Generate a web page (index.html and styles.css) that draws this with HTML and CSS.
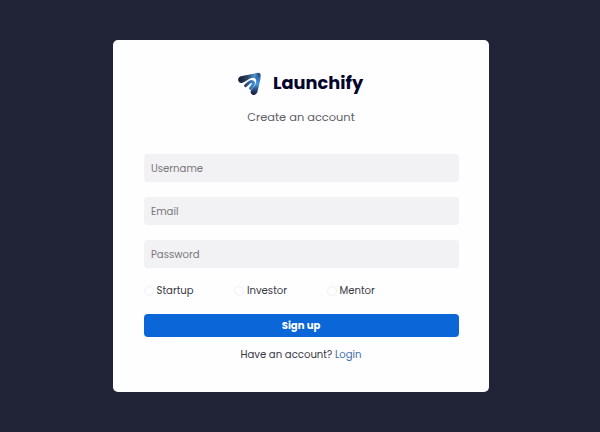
FILE: index.html
```html
<!DOCTYPE html>
<html lang="en">
<head>
<meta charset="utf-8">
<title>Launchify</title>
<link rel="stylesheet" href="styles.css">
</head>
<body>
<main class="card">
  <header class="brand">
    <svg class="logo" viewBox="0 0 72 66" aria-hidden="true">
      <defs>
        <linearGradient id="wing" x1="0" y1="0" x2="1" y2="0"><stop offset="0" stop-color="#151a35"/><stop offset=".4" stop-color="#2b415f"/><stop offset=".75" stop-color="#4f92cf"/><stop offset="1" stop-color="#16365f"/></linearGradient>
        <linearGradient id="leg" x1="0" y1="0" x2="0" y2="1"><stop offset="0" stop-color="#265c9d"/><stop offset=".45" stop-color="#4b97e0"/><stop offset=".72" stop-color="#2b4f7d"/><stop offset="1" stop-color="#151a35"/></linearGradient>
        <linearGradient id="core" x1="0" y1="0" x2="1" y2="0"><stop offset="0" stop-color="#2c4468"/><stop offset="1" stop-color="#3c8bdd"/></linearGradient>
      </defs>
      <path d="M8 10L56 0Q70-3 67 9L61 24Q54 13 43 14Q35 15 24 24L14 29Q5 33 1 24Q-2 13 8 10Z" fill="url(#wing)"/>
      <path d="M67 6Q69 12 66 24L58 58Q53 69 43 65Q34 60 40 50L50 38Q59 24 51 16Q61 14 67 6Z" fill="url(#leg)"/>
      <path d="M23 38L33 29Q42 22 46 28Q49 33 38 46" class="core"/>
    </svg>
    <h1>Launchify</h1>
  </header>
  <p class="subtitle"><span>Create an account</span></p>
  <form>
    <input class="field username" type="text" placeholder="Username" aria-label="Username">
    <input class="field email" type="email" placeholder="Email" aria-label="Email">
    <input class="field password" type="password" placeholder="Password" aria-label="Password">
    <div class="roles">
      <label><input type="radio" name="role"><span class="startup">Startup</span></label>
      <label><input type="radio" name="role"><span class="investor">Investor</span></label>
      <label><input type="radio" name="role"><span class="mentor">Mentor</span></label>
    </div>
    <button type="button">Sign up</button>
  </form>
  <p class="signin"><span>Have an account? <a href="#">Login</a></span></p>
</main>
</body>
</html>
```
FILE: styles.css
```css
* { box-sizing: border-box; }
body {
  margin: 0;
  height: 432px;
  overflow: hidden;
  display: flex;
  justify-content: center;
  align-items: center;
  background: #202436;
  font-family: Poppins, Inter, sans-serif;
  font-size: 10.1px;
  color: #38383f;
}
.card {
  width: 376px;
  height: 352px;
  margin-left: 2px;
  padding: 30px 30.5px;
  background: #fefdff;
  border-radius: 5px;
}
.brand {
  height: 28px;
  display: flex;
  align-items: center;
  gap: 11.5px;
  padding-left: 94px;
}
.logo { width: 24px; height: 22px; flex: none; overflow: visible; }
.core {
  fill: none;
  stroke: url(#core);
  stroke-width: 9;
  stroke-linecap: round;
  stroke-linejoin: round;
}
h1 {
  margin: 0;
  font-size: 17.8px;
  font-weight: 700;
  line-height: 26px;
  padding-bottom: 2px;
  color: #05052b;
}
.subtitle {
  margin: 9px 0 0;
  text-align: center;
  font-size: 11.4px;
  line-height: 20px;
  color: #606066;
}
form { margin-top: 27px; }
.field {
  display: block;
  width: 100%;
  height: 28px;
  margin: 0 0 15px;
  padding: 1px 7.5px 0;
  border: 0;
  border-radius: 4px;
  background: #f2f1f3;
  font: inherit;
  color: inherit;
}
.field::placeholder { color: #77777b; opacity: 1; }
.password { margin-bottom: 0; }
.roles {
  height: 16px;
  margin-top: 14px;
  display: grid;
  grid-template-columns: 90.5px 92.5px 1fr;
}
label { display: flex; align-items: center; gap: 3px; }
.roles input {
  appearance: none;
  width: 10px;
  height: 10px;
  margin: 0;
  border: 1px solid #f1f0f3;
  border-radius: 50%;
}
.roles span { padding-top: 1px; }
button {
  display: block;
  width: 100%;
  height: 23px;
  margin-top: 16px;
  padding: 0;
  border: 0;
  border-radius: 4px;
  background: #0b66d8;
  color: #fff;
  font: inherit;
  font-weight: 700;
}
.signin {
  margin: 10px 0 0;
  text-align: center;
  line-height: 16px;
}
a { color: #416fa9; text-decoration: none; }
```
